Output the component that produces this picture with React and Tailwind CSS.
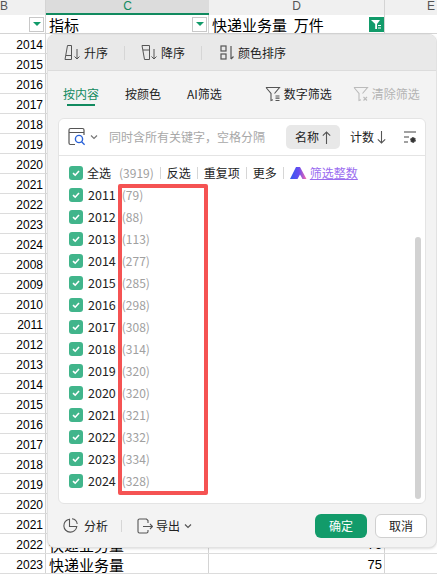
import React from 'react';

const font = { fontFamily: '"Noto Sans CJK SC", sans-serif' };
const digits = { fontFamily: '"Liberation Sans", sans-serif' };

const years = [2014, 2015, 2016, 2017, 2018, 2019, 2020, 2021, 2022, 2023, 2024, 2008, 2009, 2010, 2011, 2012, 2013, 2014, 2015, 2016, 2017, 2018, 2019, 2020, 2021, 2022, 2023];

const options = [
  { year: 2011, count: 79 },
  { year: 2012, count: 88 },
  { year: 2013, count: 113 },
  { year: 2014, count: 277 },
  { year: 2015, count: 285 },
  { year: 2016, count: 298 },
  { year: 2017, count: 308 },
  { year: 2018, count: 314 },
  { year: 2019, count: 320 },
  { year: 2020, count: 320 },
  { year: 2021, count: 321 },
  { year: 2022, count: 332 },
  { year: 2023, count: 334 },
  { year: 2024, count: 328 },
];

const Check = () => (
  <span className="flex h-[14px] w-[14px] shrink-0 items-center justify-center rounded-[3px] bg-[#41b58b]">
    <svg width="10" height="10" viewBox="0 0 10 10" fill="none" stroke="#fff" strokeWidth="1.6">
      <path d="M2 5.2l2.2 2L8 3" />
    </svg>
  </span>
);

const Divider = ({ className }) => <span className={`w-px bg-[#d6d6d6] ${className}`} />;

const SortAsc = () => (
  <svg width="17" height="17" viewBox="0 0 17 17" fill="none" stroke="#555" strokeWidth="1">
    <path d="M1 15.5L3.5 1.5h4v14zM2 11.5h5.5" />
    <path d="M13 5v10M10.5 12.5l2.5 2.5 2.5-2.5" />
  </svg>
);

const SortDesc = () => (
  <svg width="17" height="17" viewBox="0 0 17 17" fill="none" stroke="#555" strokeWidth="1">
    <path d="M1 1.5h7.5v14h-5zM2 6h6.5" />
    <path d="M13 5v10M10.5 12.5l2.5 2.5 2.5-2.5" />
  </svg>
);

const ColorSort = () => (
  <svg width="15" height="17" viewBox="0 0 15 17" fill="none" stroke="#555" strokeWidth="1.2">
    <rect x="1" y="2" width="5" height="5" />
    <rect x="1" y="10" width="5" height="5" />
    <path d="M11 2v13M11 15l2.5-2.5" />
  </svg>
);

const Funnel = ({ color, clear }) => (
  <svg width="16" height="16" viewBox="0 0 16 16" fill="none" stroke={color} strokeWidth="1.1">
    <path d="M1 1.5h13.5l-5 6M1 1.5l5 6v7l2-.8" />
    {clear ? (
      <path d="M10.5 11l3.5 3.5M14 11l-3.5 3.5" />
    ) : (
      <path d="M10.5 10h4M10.5 12.2h4M10.5 14.5h4" strokeWidth="1.2" />
    )}
  </svg>
);

const SearchBox = () => (
  <svg width="19" height="20" viewBox="0 0 19 20" fill="none" stroke="#555" strokeWidth="1.2">
    <path d="M7 17.5H2.5a1.5 1.5 0 0 1-1.5-1.5V3a1.5 1.5 0 0 1 1.5-1.5h12A1.5 1.5 0 0 1 16 3v5M1 5.5h15" />
    <circle cx="11" cy="12" r="3.6" stroke="#2a62d8" strokeWidth="1.4" />
    <path d="M13.6 14.7l3 3" stroke="#2a62d8" strokeWidth="1.4" />
  </svg>
);

const Chevron = ({ color = '#777' }) => (
  <svg width="8" height="6" viewBox="0 0 8 6" fill="none" stroke={color} strokeWidth="1.2">
    <path d="M1 1.5l3 3 3-3" />
  </svg>
);

const Arrow = ({ up }) => (
  <svg width="9" height="13" viewBox="0 0 9 13" fill="none" stroke="#555" strokeWidth="1.1">
    {up ? <path d="M4.5 13V1M.8 4.7l3.7-3.7 3.7 3.7" /> : <path d="M4.5 0v12M.8 8.3l3.7 3.7 3.7-3.7" />}
  </svg>
);

const ListSettings = () => (
  <svg width="14" height="14" viewBox="0 0 14 14" fill="none" stroke="#444" strokeWidth="1.2">
    <path d="M1 2h12M1 7h5M1 12h4" />
    <circle cx="10" cy="10" r="2.2" fill="#333" strokeWidth="1.4" strokeDasharray="1.6 .5" />
  </svg>
);

const AiLogo = () => (
  <svg width="17" height="12" viewBox="0 0 17 12">
    <defs>
      <linearGradient id="ai" x1="0" y1="0" x2="1" y2="0">
        <stop offset="0" stopColor="#2f5cf0" />
        <stop offset="0.55" stopColor="#6a4cf0" />
        <stop offset="1" stopColor="#fb6fa8" />
      </linearGradient>
    </defs>
    <path d="M0 12L6 0h4l6.5 12h-4L10 7.5 7.5 12z" fill="url(#ai)" />
  </svg>
);

const Pie = () => (
  <svg width="15" height="15" viewBox="0 0 15 15" fill="none" stroke="#555" strokeWidth="1.1">
    <path d="M6.5 1.2a6.5 6.5 0 1 0 7.3 7.3H6.5z" />
    <path d="M9 .8a6 6 0 0 1 5.2 5.2" />
  </svg>
);

const ExportIcon = () => (
  <svg width="16" height="16" viewBox="0 0 16 16" fill="none" stroke="#555" strokeWidth="1.1">
    <path d="M11 5V2.5L9.5 1H2.5A1.5 1.5 0 0 0 1 2.5v11A1.5 1.5 0 0 0 2.5 15h7a1.5 1.5 0 0 0 1.5-1.5V12" />
    <path d="M6 8.5h9.5M13 6l2.5 2.5L13 11" />
  </svg>
);

const FilterDrop = () => (
  <span className="flex h-[15px] w-[15px] items-center justify-center border border-[#c8c8c8] bg-white">
    <span className="h-0 w-0 border-x-[4px] border-t-[4px] border-x-transparent border-t-[#129b6a]" />
  </span>
);

const App = () => {
  return (
    <div className="relative h-[577px] w-[437px] overflow-hidden bg-white text-black" style={font}>
      {/* column headers */}
      <div className="flex h-[15px] items-start bg-[#f0f0f0] text-[12px] leading-[13px] text-[#555]" style={digits}>
        <div className="h-[15px] w-[46px] border-r border-[#d4d4d4] pr-[40px] text-right">B</div>
        <div className="h-[15px] w-[163px] border-b-2 border-[#118a5f] bg-[#dcdcdc] text-center text-[#118a5f]">C</div>
        <div className="h-[15px] w-[176px] border-r border-[#d4d4d4] text-center">D</div>
        <div className="flex-1 pr-[2px] text-right">E</div>
      </div>

      {/* filter row */}
      <div className="flex h-[19px] border-b border-[#d4d4d4] text-[15px] leading-[20px]">
        <div className="flex w-[46px] items-center justify-end border-r border-[#d4d4d4] pr-[1px]">
          <FilterDrop />
        </div>
        <div className="flex w-[163px] items-center justify-between border-r border-[#d4d4d4] pl-[3px] pr-[1px]">
          <span className="pt-[2px]">指标</span>
          <FilterDrop />
        </div>
        <div className="flex w-[176px] items-center justify-between border-r border-[#d4d4d4] pl-[3px]">
          <span className="whitespace-pre pt-[2px]">快递业务量  万件</span>
          <span className="flex h-[15px] w-[15px] items-center justify-center bg-[#129b6a]">
            <svg width="11" height="11" viewBox="0 0 11 11" fill="#fff">
              <path d="M0 1h9L6 5v5H4.2V5z" />
              <path d="M7 6h3v1H7zM7 8.5h3v1H7z" />
            </svg>
          </span>
        </div>
      </div>

      {/* sheet rows */}
      {years.map((y, i) => (
        <div key={i} className="flex h-[20px] border-b border-[#dcdcdc] text-[12px] leading-[20px]" style={digits}>
          <div className="w-[46px] border-r border-[#d4d4d4] pr-[2px] pt-[1px] text-right">{y}</div>
          <div className="w-[163px] border-r border-[#d4d4d4] pl-[3px] pt-[1px] text-[15px]" style={font}>
            {i >= 25 ? '快递业务量' : ''}
          </div>
          <div className="w-[176px] border-r border-[#d4d4d4] pr-[2px] pt-[1px] text-right text-[13px]">{i === 26 ? '75' : i === 25 ? '76' : ''}</div>
        </div>
      ))}

      {/* filter popup */}
      <div className="absolute left-[47px] top-[34px] flex h-[514px] w-[390px] flex-col overflow-hidden rounded-[8px] border border-[#e2e2e2] bg-[#f3f3f3] text-[12px] text-[#222] shadow-sm">
        <div className="flex h-[36px] shrink-0 items-center border-b border-[#dcdcdc] bg-[#e9e9e9] pl-[16px]">
          <SortAsc />
          <span className="ml-[3px]">升序</span>
          <Divider className="ml-[16px] h-[14px]" />
          <span className="ml-[16px] flex items-center"><SortDesc /></span>
          <span className="ml-[3px]">降序</span>
          <Divider className="ml-[16px] h-[14px]" />
          <span className="ml-[18px] flex items-center"><ColorSort /></span>
          <span className="ml-[3px]">颜色排序</span>
        </div>

        <div className="flex h-[47px] shrink-0 items-center pb-[2px] pl-[15px]">
          <span className="relative text-[#118a5f]">
            按内容
            <span className="absolute left-[4px] top-[19px] h-[2px] w-[28px] bg-[#118a5f]" />
          </span>
          <span className="ml-[26px]">按颜色</span>
          <span className="ml-[26px]">AI筛选</span>
          <span className="ml-[43px] flex items-center"><Funnel color="#555" /></span>
          <span className="ml-[3px]">数字筛选</span>
          <span className="ml-[21px] flex items-center"><Funnel color="#bbb" clear /></span>
          <span className="ml-[3px] text-[#b4b4b4]">清除筛选</span>
        </div>

        <div className="ml-[10px] mr-[10px] flex h-[386px] shrink-0 flex-col rounded-[6px] border border-[#e4e4e4] bg-white">
          <div className="flex h-[37px] shrink-0 items-center border-b border-[#e4e4e4] pl-[9px]">
            <SearchBox />
            <span className="ml-[3px]"><Chevron /></span>
            <span className="ml-[11px] w-[177px] text-[#a8a8a8]">同时含所有关键字，空格分隔</span>
            <span className="flex h-[24px] w-[54px] items-center justify-center gap-[3px] rounded-[5px] bg-[#e8e8e8]">
              名称<Arrow up />
            </span>
            <span className="ml-[10px] flex items-center gap-[3px]">
              计数<Arrow />
            </span>
            <span className="ml-[17px] flex"><ListSettings /></span>
          </div>

          <div className="relative flex-1 pl-[10px] pt-[6px]">
            <div className="flex h-[22px] items-center">
              <Check />
              <span className="ml-[4px]">全选</span>
              <span className="ml-[8px] text-[#a0a0a0]">(3919)</span>
              <Divider className="ml-[6px] h-[12px]" />
              <span className="ml-[6px]">反选</span>
              <Divider className="ml-[6px] h-[12px]" />
              <span className="ml-[6px]">重复项</span>
              <Divider className="ml-[6px] h-[12px]" />
              <span className="ml-[6px]">更多</span>
              <Divider className="ml-[6px] h-[12px]" />
              <span className="ml-[6px] flex"><AiLogo /></span>
              <span className="ml-[3px] text-[#9a6cf0] underline">筛选整数</span>
            </div>
            {options.map((o) => (
              <div key={o.year} className="flex h-[22px] items-center">
                <Check />
                <span className="ml-[5px] text-[12.5px]">{o.year}</span>
                <span className="ml-[6px] text-[#a0a0a0]">({o.count})</span>
              </div>
            ))}
            <span className="absolute right-[4px] top-[81px] h-[262px] w-[6px] rounded-full bg-[#d2d2d2]" />
          </div>
        </div>

        <div className="flex flex-1 items-center pl-[15px] pr-[9px]">
          <Pie />
          <span className="ml-[6px]">分析</span>
          <Divider className="ml-[13px] h-[12px]" />
          <span className="ml-[15px] flex"><ExportIcon /></span>
          <span className="ml-[3px]">导出</span>
          <span className="ml-[4px]"><Chevron color="#555" /></span>
          <button className="ml-auto h-[24px] w-[52px] rounded-[6px] bg-[#129b6a] text-white">确定</button>
          <button className="ml-[8px] h-[24px] w-[52px] rounded-[6px] border border-[#d0d0d0] bg-white">取消</button>
        </div>
      </div>

      {/* red annotation box */}
      <div className="absolute left-[118px] top-[184px] h-[311px] w-[90px] rounded-[2px] border-[4px] border-[#f55353]" />
    </div>
  );
};

export default App;
